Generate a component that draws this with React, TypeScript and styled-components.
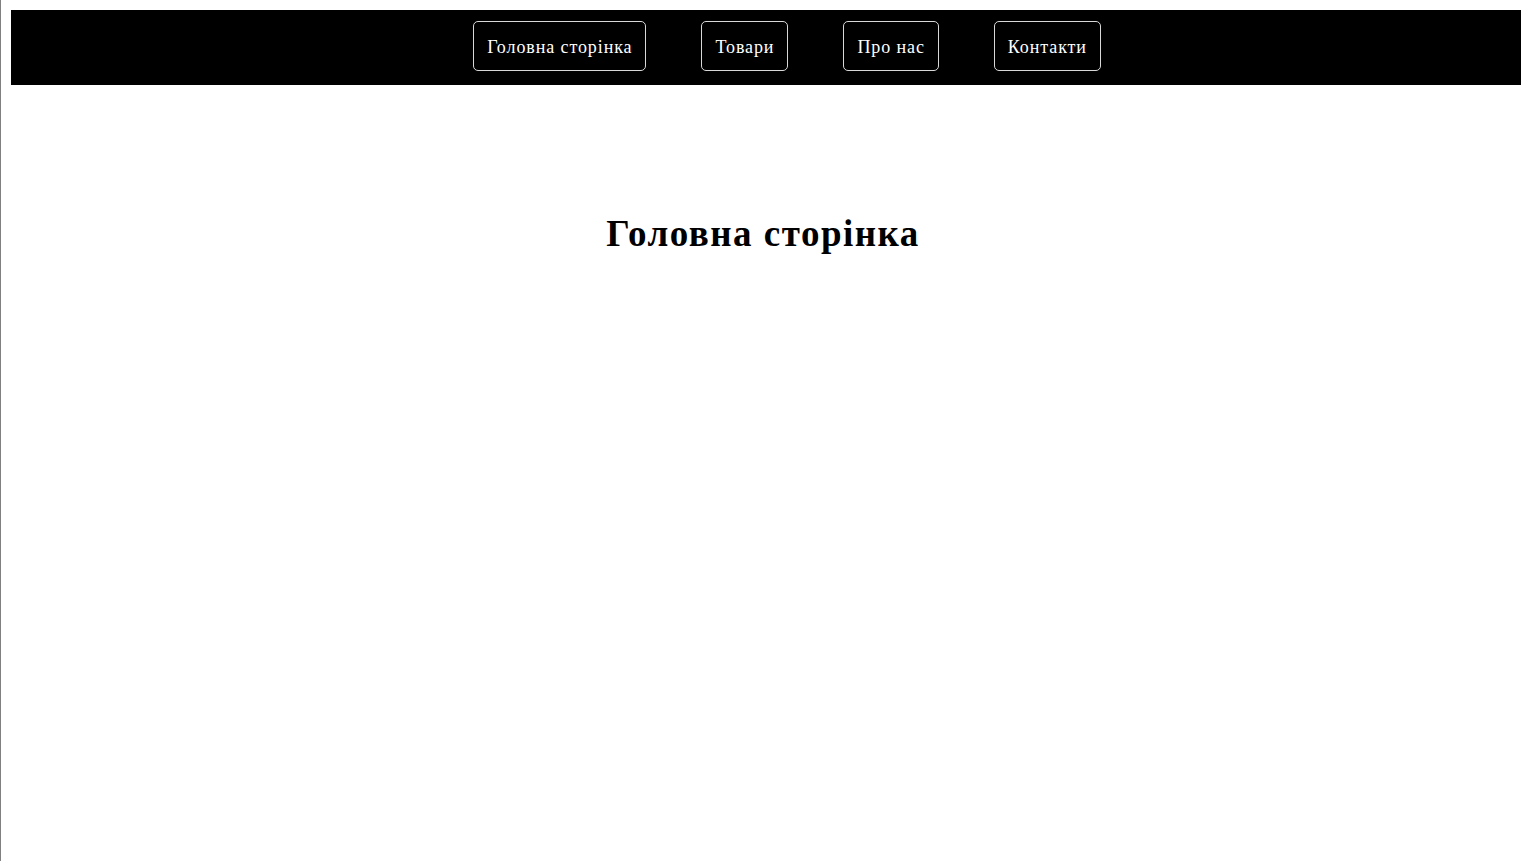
import React from "react";
import styled, { createGlobalStyle } from "styled-components";

const Global = createGlobalStyle`
  html, body { margin: 0; padding: 0; background: #fff; }
  body { font-family: "Liberation Serif", "Times New Roman", serif; overflow: hidden; }
`;

const Page = styled.div`
  min-height: 100vh;
  box-sizing: border-box;
  border-left: 1px solid #808080;
  padding: 10px 0 0 10px;
`;

const NavBar = styled.nav`
  background: #000;
  height: 75px;
  box-sizing: border-box;
`;

const NavList = styled.ul`
  list-style: none;
  margin: 0;
  padding: 11px 0 0 42px;
  display: flex;
  justify-content: center;
  gap: 55px;
`;

const NavButton = styled.a`
  display: block;
  padding: 14px 13px 12px 13px;
  line-height: 22px;
  font-size: 18px;
  letter-spacing: 0.9px;
  color: #fff;
  text-decoration: none;
  border: 1px solid #d8d8d8;
  border-radius: 5px;
`;

const Main = styled.main`
  padding-top: 127px;
  text-align: center;
`;

const Title = styled.h1`
  margin: 0;
  font-size: 37px;
  font-weight: bold;
  line-height: 44px;
  letter-spacing: 1.5px;
  padding-right: 6px;
`;

const items = ["Головна сторінка", "Товари", "Про нас", "Контакти"];

export default function App() {
  return (
    <>
      <Global />
      <Page>
        <NavBar>
          <NavList>
            {items.map((t) => (
              <li key={t}>
                <NavButton href="#">{t}</NavButton>
              </li>
            ))}
          </NavList>
        </NavBar>
        <Main>
          <Title>Головна сторінка</Title>
        </Main>
      </Page>
    </>
  );
}
